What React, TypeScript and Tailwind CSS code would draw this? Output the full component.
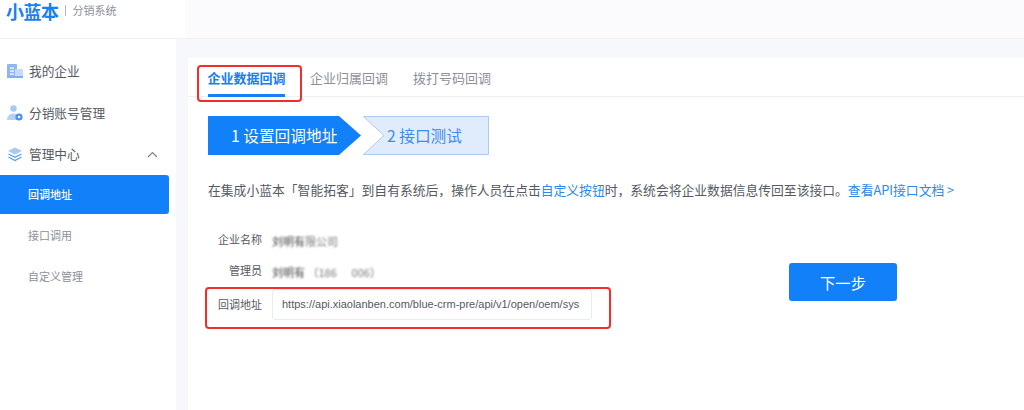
import React from "react";

const cjk = "font-['Noto_Sans_CJK_SC','Liberation_Sans',sans-serif]";

function IconCompany() {
  return (
    <svg width="16" height="16" viewBox="0 0 16 16">
      <rect x="0" y="1" width="10" height="14" rx="1" fill="#8fb8f2" />
      <rect x="8" y="6" width="8" height="9" rx="1" fill="#c5dbf8" />
      <rect x="3" y="4.5" width="4" height="1.2" fill="#fff" />
      <rect x="3" y="7.5" width="4" height="1.2" fill="#fff" />
      <rect x="3" y="10.5" width="4" height="1.2" fill="#fff" />
      <rect x="0" y="13" width="16" height="2" fill="#7fb0f5" />
    </svg>
  );
}

function IconUser() {
  return (
    <svg width="16" height="16" viewBox="0 0 16 16">
      <circle cx="6.5" cy="3.5" r="3.2" fill="#a8c8f5" />
      <path d="M0 15c0-4 2.5-6.5 6.5-6.5 1.5 0 2.600.3 3.500.9V15z" fill="#b8d2f7" />
      <circle cx="12" cy="12" r="3.600" fill="#4a90f0" />
      <circle cx="12" cy="12" r="1.300" fill="#fff" />
    </svg>
  );
}

function IconLayers() {
  return (
    <svg width="16" height="16" viewBox="0 0 16 16" fill="none">
      <path d="M8 1.500 15 5 8 8.500 1 5z" fill="#a8c8f5" />
      <path d="M1.500 8 8 11.300 14.500 8" stroke="#5a9cf2" strokeWidth="1.400" />
      <path d="M1.500 11 8 14.500 14.500 11" stroke="#5a9cf2" strokeWidth="1.400" />
    </svg>
  );
}

function SideItem({ icon, label, chevron, className }: { icon: React.ReactNode; label: string; chevron?: boolean; className?: string }) {
  return (
    <div className={`flex h-[42px] items-center pl-[7px] pr-[18px] text-[12.7px] text-[#555a63] ${className ?? ""}`}>
      <span className="flex w-[22px] shrink-0">{icon}</span>
      <span>{label}</span>
      {chevron && (
        <svg className="ml-auto" width="11" height="7" viewBox="0 0 11 7" fill="none">
          <path d="M1 6l4.500-4.500L10 6" stroke="#7d828a" strokeWidth="1.200" />
        </svg>
      )}
    </div>
  );
}

function FormRow({ label, children, className }: { label: string; children: React.ReactNode; className?: string }) {
  return (
    <div className={`flex items-center ${className ?? ""}`}>
      <div className="w-[54px] shrink-0 text-right text-[11px] text-[#555a63]">{label}</div>
      <div className="ml-[10px] min-w-0">{children}</div>
    </div>
  );
}

export default function App() {
  return (
    <div className={`relative flex h-[410px] w-[1024px] flex-col overflow-hidden bg-[#f7f8fb] ${cjk}`}>
      <header className="flex h-[39px] shrink-0 border-b border-[#f0f1f4] bg-[#fbfbfd]">
        <div className="flex w-[185px] items-center bg-white pb-[17px] pl-[6px]">
          <span className="text-[18px] font-bold leading-none tracking-[-0.5px] text-[#1680f5]">小蓝本</span>
          <span className="ml-[6px] h-[11px] w-px bg-[#b5b8bd]" />
          <span className="ml-[7px] text-[11px] text-[#8d9199]">分销系统</span>
        </div>
      </header>

      <div className="flex min-h-0 flex-1">
        <aside className="w-[176px] shrink-0 bg-white pt-[11px]">
          <SideItem icon={<IconCompany />} label="我的企业" />
          <SideItem icon={<IconUser />} label="分销账号管理" />
          <SideItem icon={<IconLayers />} label="管理中心" chevron className="-mt-px" />
          <div className="flex h-[39px] w-[169px] items-center rounded-r-[3px] bg-[#1280f8] pl-[28px] text-[11px] font-medium text-white">
            回调地址
          </div>
          <div className="flex h-[42px] items-center pl-[28px] text-[11px] text-[#8d9199]">接口调用</div>
          <div className="flex h-[41px] items-center pl-[28px] text-[11px] text-[#8d9199]">自定义管理</div>
        </aside>

        <main className="ml-[12px] mt-[19px] flex-1 bg-white">
          <nav className="flex h-[39px] items-start border-b border-[#eef0f6] pl-[20px] text-[13px] whitespace-nowrap text-[#8d9199]">
            <div className="flex h-[39px] w-[77px] justify-center border-b-[3px] border-[#1280f8] pt-[10px] font-bold leading-[20px] text-[#1280f8]">
              企业数据回调
            </div>
            <div className="ml-[25px] pt-[10px] leading-[20px]">企业归属回调</div>
            <div className="ml-[25px] pt-[10px] leading-[20px]">拨打号码回调</div>
          </nav>

          <div className="ml-[20px] mt-[19px] flex h-[39px] items-stretch">
            <div className="relative flex w-[153px] items-center pl-[23px] text-[15.7px] text-white">
              <svg className="absolute inset-0" width="153" height="39" viewBox="0 0 153 39">
                <path d="M0 0H131L153 19.500 131 39H0z" fill="#1280f8" />
              </svg>
              <span className="relative whitespace-nowrap">1 设置回调地址</span>
            </div>
            <div className="relative ml-[2px] flex w-[126px] items-center pl-[24px] text-[15.7px] text-[#3e8bee]">
              <svg className="absolute inset-0" width="126" height="39" viewBox="0 0 126 39">
                <path d="M.5.500H125.500V38.500H.5L21 19.500z" fill="#e0ecfc" stroke="#a9caf5" />
              </svg>
              <span className="relative whitespace-nowrap">2 接口测试</span>
            </div>
          </div>

          <p className="ml-[20px] mt-[23px] whitespace-nowrap text-[12.8px] leading-[24px] text-[#555a63]">
            在集成小蓝本「智能拓客」到自有系统后，操作人员在点击
            <span className="text-[#2c88ec]">自定义按钮</span>
            时，系统会将企业数据信息传回至该接口。
            <span className="text-[#2c88ec]">查看API接口文档 &gt;</span>
          </p>

          <div className="ml-[-24px] mt-[25px]">
            <div className="ml-[44px] flex w-[400px] flex-col">
              <FormRow label="企业名称" className="h-[24px]">
                <span className="text-[11px] text-[#777] blur-[0.8px]">
                  <span className="text-[#444]">刘明有</span>限公司
                </span>
              </FormRow>
              <FormRow label="管理员" className="mt-[7px] h-[24px]">
                <span className="whitespace-pre text-[11px] text-[#777] blur-[0.8px]">
                  <span className="text-[#444]">刘明有</span> （186      006）
                </span>
              </FormRow>
              <FormRow label="回调地址" className="mt-[7px] h-[31px]">
                <div className="flex h-[31px] w-[320px] items-center overflow-hidden rounded-[3px] border border-[#e8ebf1] bg-white px-[9px] font-['Liberation_Sans',sans-serif] text-[11px] whitespace-nowrap text-[#555a63]">
                  https://api.xiaolanben.com/blue-crm-pre/api/v1/open/oem/sys
                </div>
              </FormRow>
            </div>
          </div>
        </main>
      </div>

      <button className="absolute left-[789px] top-[263px] h-[38px] w-[108px] rounded-[3px] bg-[#1280f8] text-[15.3px] text-white">
        下一步
      </button>

      <div className="absolute left-[197px] top-[65px] h-[37px] w-[105px] rounded-[4px] border-2 border-[#f22e2a]" />
      <div className="absolute left-[205px] top-[287px] h-[42px] w-[406px] rounded-[4px] border-2 border-[#f22e2a]" />
    </div>
  );
}
